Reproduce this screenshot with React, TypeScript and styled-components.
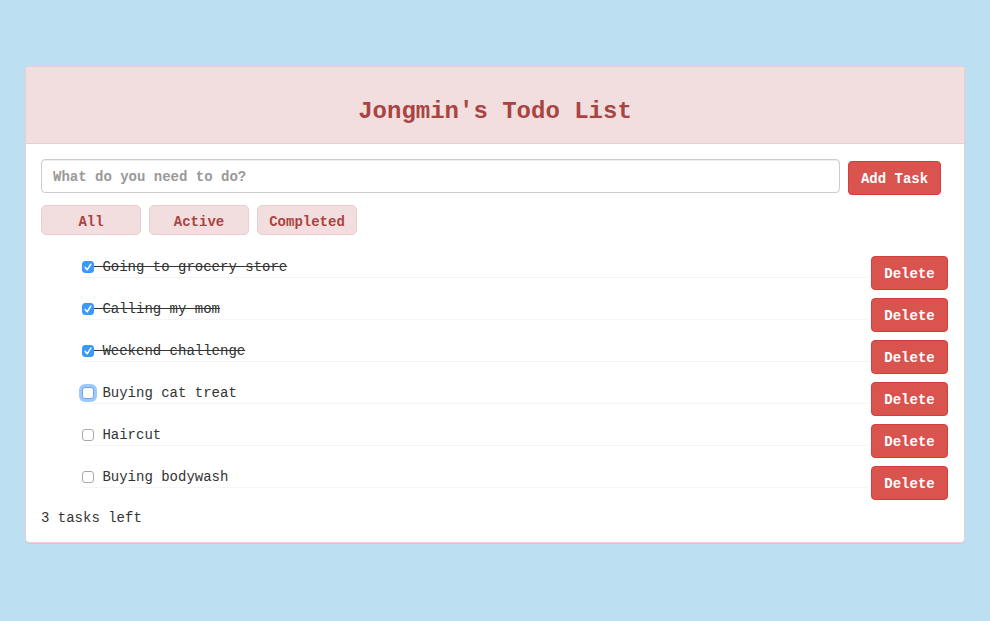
import { useState } from "react";
import type { FormEvent } from "react";
import styled, { createGlobalStyle } from "styled-components";

const GlobalStyle = createGlobalStyle`
  *, *::before, *::after { box-sizing: border-box; }
  body {
    margin: 0;
    background: #bcdff1;
    color: #333;
    font-family: "Courier New", "Liberation Mono", monospace;
    font-size: 14px;
    line-height: 20px;
  }
  button, input { font: inherit; }
`;

const Page = styled.main`
  padding: 66px 25px;
`;

const Panel = styled.section`
  background: #fff;
  border: 1px solid #ebccd1;
  border-radius: 4px;
  box-shadow: 0 1px 1px rgba(0, 0, 0, 0.05);
`;

const PanelHeader = styled.header`
  padding: 32px 15px 18px;
  background: #f2dede;
  border-bottom: 1px solid #ebccd1;
  border-radius: 3px 3px 0 0;
  text-align: center;
`;

const Title = styled.h1`
  margin: 0;
  color: #a94442;
  font-size: 24px;
  font-weight: 700;
  line-height: 26px;
`;

const PanelBody = styled.div`
  padding: 15px 16px 14px 15px;
`;

const TaskForm = styled.form`
  display: flex;
  align-items: flex-start;
  gap: 8px;
  padding-right: 7px;
`;

const TaskInput = styled.input`
  flex: 1;
  min-width: 0;
  height: 34px;
  padding: 8px 11px 6px;
  background: #fff;
  border: 1px solid #ccc;
  border-radius: 4px;
  box-shadow: inset 0 1px 1px rgba(0, 0, 0, 0.075);
  color: #555;
  font-weight: 700;

  &::placeholder {
    color: #999;
    opacity: 1;
  }
`;

const DangerButton = styled.button`
  flex: none;
  min-width: 77px;
  height: 34px;
  padding: 2px 12px 0;
  background: #d9534f;
  border: 1px solid #d43f3a;
  border-radius: 4px;
  color: #fff;
  font-weight: 700;
  cursor: pointer;
`;

const AddButton = styled(DangerButton)`
  padding: 2px 11px 0;
  min-width: 93px;
  margin-top: 2px;
`;

const Filters = styled.div`
  display: flex;
  gap: 8px;
  margin-top: 10px;
`;

const FilterButton = styled.button`
  width: 100px;
  height: 30px;
  padding: 3px 0 0;
  background: #f2dede;
  border: 1px solid #ebccd1;
  border-radius: 5px;
  color: #a94442;
  font-weight: 700;
  cursor: pointer;
`;

const TaskList = styled.ul`
  display: flex;
  flex-direction: column;
  gap: 8px;
  margin: 21px 0 0;
  padding: 0 0 0 40px;
  list-style: none;
`;

const TaskRow = styled.li`
  display: flex;
  align-items: flex-start;
`;

const TaskLabel = styled.label`
  flex: 1;
  display: flex;
  align-items: center;
  height: 22px;
  padding-left: 1px;
  border-bottom: 1px solid #f5f5f5;
  border-radius: 4px;
  cursor: pointer;
`;

const TaskText = styled.span<{ $done: boolean }>`
  white-space: pre;
  text-decoration: ${(p) => (p.$done ? "line-through" : "none")};
`;

const Checkbox = styled.input<{ $highlighted: boolean }>`
  appearance: none;
  width: 12px;
  height: 12px;
  margin: 0;
  background: #fff;
  border: 1px solid ${(p) => (p.$highlighted ? "#76a5da" : "#a9a9a9")};
  border-radius: 3px;
  box-shadow: ${(p) => (p.$highlighted ? "0 0 0 3px #9dcafc" : "none")};

  &:checked {
    background: #3b99fc;
    border-color: #3b99fc;
  }
`;

const CheckSlot = styled.span`
  display: grid;
  flex: none;
  width: 12px;

  > * {
    grid-area: 1 / 1;
  }
`;

const CheckMark = styled.svg`
  width: 12px;
  height: 12px;
  fill: none;
  stroke: #fff;
  stroke-width: 1.5;
  stroke-linecap: round;
  stroke-linejoin: round;
  pointer-events: none;
`;

const Remaining = styled.p`
  margin: 8px 0 0;
  line-height: 20px;
`;

type Task = { id: number; text: string; done: boolean };
type Filter = "All" | "Active" | "Completed";

const filters: Filter[] = ["All", "Active", "Completed"];

const initialTasks: Task[] = [
  { id: 1, text: "Going to grocery store", done: true },
  { id: 2, text: "Calling my mom", done: true },
  { id: 3, text: "Weekend challenge", done: true },
  { id: 4, text: "Buying cat treat", done: false },
  { id: 5, text: "Haircut", done: false },
  { id: 6, text: "Buying bodywash", done: false },
];

export default function App() {
  const [tasks, setTasks] = useState(initialTasks);
  const [filter, setFilter] = useState<Filter>("All");
  const [draft, setDraft] = useState("");
  const [lastToggled, setLastToggled] = useState(4);

  const addTask = (event: FormEvent) => {
    event.preventDefault();
    if (!draft.trim()) return;
    setTasks([...tasks, { id: Date.now(), text: draft.trim(), done: false }]);
    setDraft("");
  };

  const toggle = (id: number) => {
    setTasks(tasks.map((t) => (t.id === id ? { ...t, done: !t.done } : t)));
    setLastToggled(id);
  };

  const visible = tasks.filter(
    (t) => filter === "All" || t.done === (filter === "Completed")
  );

  return (
    <>
      <GlobalStyle />
      <Page>
        <Panel>
          <PanelHeader>
            <Title>Jongmin's Todo List</Title>
          </PanelHeader>
          <PanelBody>
            <TaskForm onSubmit={addTask}>
              <TaskInput
                type="text"
                aria-label="New task"
                placeholder="What do you need to do?"
                value={draft}
                onChange={(e) => setDraft(e.target.value)}
              />
              <AddButton type="submit">Add Task</AddButton>
            </TaskForm>
            <Filters>
              {filters.map((name) => (
                <FilterButton
                  key={name}
                  type="button"
                  aria-pressed={filter === name}
                  onClick={() => setFilter(name)}
                >
                  {name}
                </FilterButton>
              ))}
            </Filters>
            <TaskList>
              {visible.map((task) => (
                <TaskRow key={task.id}>
                  <TaskLabel>
                    <CheckSlot>
                      <Checkbox
                        type="checkbox"
                        checked={task.done}
                        $highlighted={task.id === lastToggled}
                        onChange={() => toggle(task.id)}
                      />
                      {task.done && (
                        <CheckMark viewBox="0 0 12 12" aria-hidden="true">
                          <path d="M3.2 6.4 5.2 8.8 8.8 3.2" />
                        </CheckMark>
                      )}
                    </CheckSlot>
                    <TaskText $done={task.done}>{" " + task.text}</TaskText>
                  </TaskLabel>
                  <DangerButton
                    type="button"
                    onClick={() =>
                      setTasks(tasks.filter((t) => t.id !== task.id))
                    }
                  >
                    Delete
                  </DangerButton>
                </TaskRow>
              ))}
            </TaskList>
            <Remaining>{tasks.filter((t) => !t.done).length} tasks left</Remaining>
          </PanelBody>
        </Panel>
      </Page>
    </>
  );
}
